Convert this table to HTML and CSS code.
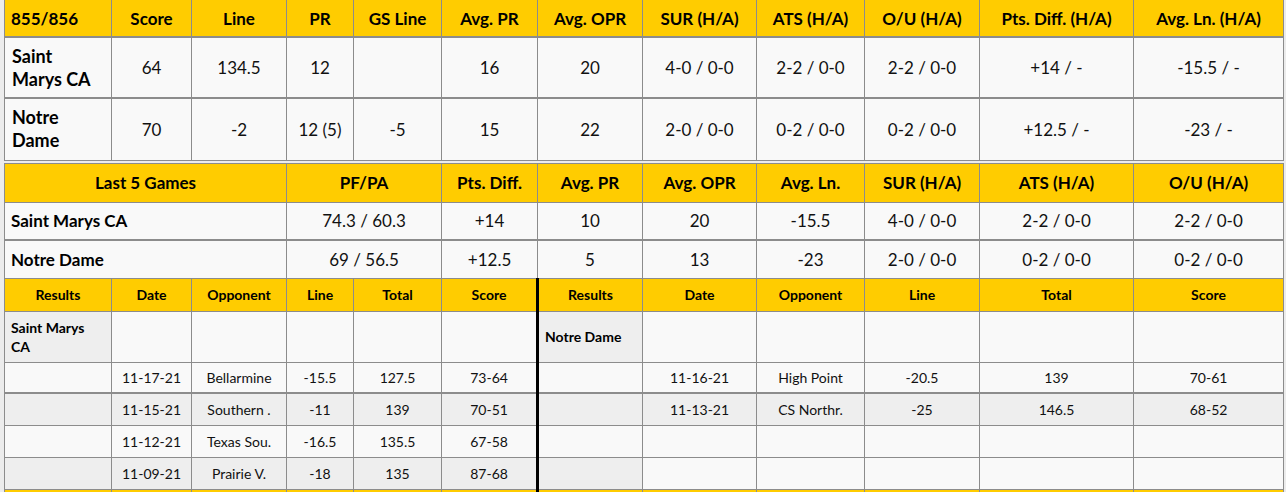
FILE: index.html
```html
<!DOCTYPE html>
<html>
<head>
<meta charset="utf-8">
<link rel="stylesheet" href="styles.css">
</head>
<body>
<div class="page">
<table class="grid top">
  <colgroup>
    <col class="c1"><col class="c2"><col class="c3"><col class="c4"><col class="c5"><col class="c6"><col class="c7"><col class="c8"><col class="c9"><col class="c10"><col class="c11"><col class="c12">
  </colgroup>
  <tr class="hrow">
    <th class="left">855/856</th><th>Score</th><th>Line</th><th>PR</th><th>GS Line</th><th>Avg. PR</th><th>Avg. OPR</th><th>SUR (H/A)</th><th>ATS (H/A)</th><th>O/U (H/A)</th><th>Pts. Diff. (H/A)</th><th>Avg. Ln. (H/A)</th>
  </tr>
  <tr class="trow">
    <td class="team">Saint Marys CA</td><td>64</td><td>134.5</td><td>12</td><td></td><td>16</td><td>20</td><td>4-0 / 0-0</td><td>2-2 / 0-0</td><td>2-2 / 0-0</td><td>+14 / -</td><td>-15.5 / -</td>
  </tr>
  <tr class="trow">
    <td class="team">Notre Dame</td><td>70</td><td>-2</td><td>12 (5)</td><td>-5</td><td>15</td><td>22</td><td>2-0 / 0-0</td><td>0-2 / 0-0</td><td>0-2 / 0-0</td><td>+12.5 / -</td><td>-23 / -</td>
  </tr>
</table>

<table class="grid last">
  <colgroup>
    <col class="c1"><col class="c2"><col class="c3"><col class="c4"><col class="c5"><col class="c6"><col class="c7"><col class="c8"><col class="c9"><col class="c10"><col class="c11"><col class="c12">
  </colgroup>
  <tr class="lhead">
    <th colspan="3">Last 5 Games</th><th colspan="2">PF/PA</th><th>Pts. Diff.</th><th>Avg. PR</th><th>Avg. OPR</th><th>Avg. Ln.</th><th>SUR (H/A)</th><th>ATS (H/A)</th><th>O/U (H/A)</th>
  </tr>
  <tr class="lrow sep">
    <td colspan="3" class="team">Saint Marys CA</td><td colspan="2">74.3 / 60.3</td><td>+14</td><td>10</td><td>20</td><td>-15.5</td><td>4-0 / 0-0</td><td>2-2 / 0-0</td><td>2-2 / 0-0</td>
  </tr>
  <tr class="lrow">
    <td colspan="3" class="team">Notre Dame</td><td colspan="2">69 / 56.5</td><td>+12.5</td><td>5</td><td>13</td><td>-23</td><td>2-0 / 0-0</td><td>0-2 / 0-0</td><td>0-2 / 0-0</td>
  </tr>
  <tr class="rhead">
    <th>Results</th><th>Date</th><th>Opponent</th><th>Line</th><th>Total</th><th>Score</th>
    <th class="split">Results</th><th>Date</th><th>Opponent</th><th>Line</th><th>Total</th><th>Score</th>
  </tr>
  <tr class="rteam">
    <td class="rname">Saint Marys CA</td><td></td><td></td><td></td><td></td><td></td>
    <td class="rname split">Notre Dame</td><td></td><td></td><td></td><td></td><td></td>
  </tr>
  <tr class="rrow first">
    <td></td><td>11-17-21</td><td>Bellarmine</td><td>-15.5</td><td>127.5</td><td>73-64</td>
    <td class="split"></td><td>11-16-21</td><td>High Point</td><td>-20.5</td><td>139</td><td>70-61</td>
  </tr>
  <tr class="rrow alt">
    <td></td><td>11-15-21</td><td>Southern .</td><td>-11</td><td>139</td><td>70-51</td>
    <td class="split"></td><td>11-13-21</td><td>CS Northr.</td><td>-25</td><td>146.5</td><td>68-52</td>
  </tr>
  <tr class="rrow">
    <td></td><td>11-12-21</td><td>Texas Sou.</td><td>-16.5</td><td>135.5</td><td>67-58</td>
    <td class="split"></td><td></td><td></td><td></td><td></td><td></td>
  </tr>
  <tr class="rrow">
    <td class="shade"></td><td class="shade">11-09-21</td><td class="shade">Prairie V.</td><td class="shade">-18</td><td class="shade">135</td><td class="shade">87-68</td>
    <td class="split shade"></td><td></td><td></td><td></td><td></td><td></td>
  </tr>
  <tr class="rhead">
    <th></th><th></th><th></th><th></th><th></th><th></th>
    <th class="split"></th><th></th><th></th><th></th><th></th><th></th>
  </tr>
</table>
</div>
</body>
</html>
```

FILE: styles.css
```css
html, body {
  margin: 0;
  padding: 0;
  background: #ececec;
}

.page {
  padding: 0 3px 0 4px;
  width: 1279px;
  font-family: Lato, "Open Sans", sans-serif;
  color: #111;
}

.grid {
  width: 1279px;
  table-layout: fixed;
  border-collapse: collapse;
  background: #f9f9f9;
}

.grid th,
.grid td {
  border: 1px solid #8c8c8c;
  padding: 0 6px;
  text-align: center;
  vertical-align: middle;
  overflow: hidden;
}

.grid th {
  background: #ffcc00;
  font-weight: 700;
  color: #000;
}

.c1 { width: 107px; }
.c2 { width: 80px; }
.c3 { width: 95px; }
.c4 { width: 67px; }
.c5 { width: 88px; }
.c6 { width: 96px; }
.c7 { width: 105px; }
.c8 { width: 114px; }
.c9 { width: 108px; }
.c10 { width: 115px; }
.c11 { width: 154px; }
.c12 { width: 150px; }

/* top table */
.top {
  font-size: 17px;
}
.top th {
  border-top: 0;
}
.top .hrow { height: 37px; }
.top .trow { height: 61px; }
.top .trow + .trow { height: 62px; }
.top .trow td {
  border-top-width: 2px;
}
.top .left {
  text-align: left;
}
.top .team {
  text-align: left;
  font-size: 18px;
  padding: 0 12px 0 7px;
}
.team {
  font-weight: 700;
  line-height: 23px;
  color: #000;
}

/* last 5 games + results */
.last {
  margin-top: 2px;
  font-size: 17px;
}
.lhead { height: 39px; }
.lrow { height: 38px; }
.lrow .team { text-align: left; }
.lrow.sep + .lrow td { border-top-width: 2px; }

.rhead {
  height: 33px;
  font-size: 14px;
}
.rteam { height: 51px; font-size: 14px; }
.rrow { height: 32px; font-size: 14px; }
.rrow.first { height: 31px; }
.rrow.alt td { border-top-width: 2px; background: #eeeeee; }

.rname {
  text-align: left !important;
  font-weight: 700;
  line-height: 19px;
  color: #000;
  background: #eeeeee;
}

.shade { background: #eeeeee; }

.grid .split {
  border-left: 3px solid #000;
}
```
